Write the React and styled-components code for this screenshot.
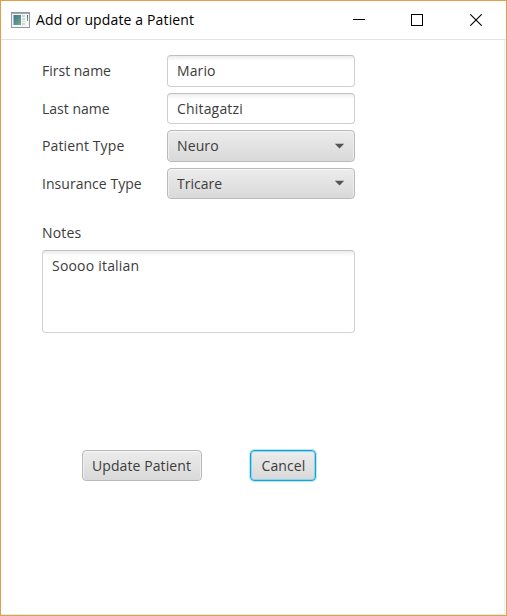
import React from "react";
import styled, { createGlobalStyle } from "styled-components";

const GlobalStyle = createGlobalStyle`
  * { box-sizing: border-box; }
  html, body { margin: 0; background: #fff; }
  button, input, textarea { font: inherit; letter-spacing: inherit; color: inherit; }
`;

const Window = styled.div`
  width: 507px;
  height: 616px;
  display: flex;
  flex-direction: column;
  border: 1px solid #e09f48;
  background: #fff;
  font-family: "Open Sans", "Noto Sans", sans-serif;
  font-size: 14px;
  color: #3c3c3c;
  overflow: hidden;
`;

const TitleBar = styled.header`
  flex: none;
  height: 39px;
  display: flex;
  align-items: center;
  padding: 0 1px 0 10px;
  border-bottom: 1px solid #e3e3e3;
`;

const AppIcon = styled.svg`
  display: block;
  width: 19px;
  height: 16px;
  margin-top: -1px;
`;

const Title = styled.h1`
  margin: 0 auto 0 6px;
  font-size: 14px;
  line-height: 20px;
  font-weight: 400;
  letter-spacing: 0.14px;
  color: #000;
  white-space: nowrap;
`;

const WindowButton = styled.button`
  width: 58.5px;
  height: 38px;
  padding: 0;
  display: flex;
  align-items: center;
  justify-content: center;
  border: 0;
  background: none;

  svg { display: block; }
`;

const Content = styled.main`
  flex: 1;
  margin: 0 1px 0 0;
  border-right: 1px solid #edf0ee;
  border-bottom: 1px solid #e3e8e4;
  padding: 15px 0 0 41px;
`;

const Fields = styled.div`
  display: grid;
  grid-template-columns: 125px 188px;
  grid-auto-rows: 31.5px;
  row-gap: 6px;
`;

const Label = styled.label`
  display: block;
  line-height: 32px;
  white-space: nowrap;
  letter-spacing: ${(p) => p.$spacing || "0"};
`;

const TextInput = styled.input`
  width: 188px;
  height: 31.5px;
  padding: 0 9px;
  border: 1px solid #cfcfcf;
  border-top-color: #c0c0c0;
  border-radius: 4px;
  outline: 0;
  background: linear-gradient(#ececec, #fff 5px);
  letter-spacing: ${(p) => p.$spacing || "0"};
`;

const Combo = styled.button`
  width: 188px;
  height: 31.5px;
  padding: 0 9px;
  display: flex;
  align-items: center;
  justify-content: space-between;
  border: 1px solid #bababa;
  border-radius: 4px;
  background: linear-gradient(#ececec, #d9d9d9);
  box-shadow: inset 0 1px 0 #f6f6f6, inset 1px 0 0 #eee, inset -1px 0 0 #eee;
  letter-spacing: ${(p) => p.$spacing || "0"};
`;

const NotesLabel = styled(Label)`
  margin-top: 17.5px;
`;

const Notes = styled.textarea`
  display: block;
  width: 313px;
  height: 82.5px;
  margin-top: 1.5px;
  padding: 5px 9px;
  line-height: 20px;
  resize: none;
  outline: 0;
  border: 1px solid #d3d3d3;
  border-top-color: #c0c0c0;
  border-radius: 4px;
  background: linear-gradient(#ececec, #fff 5px);
  letter-spacing: ${(p) => p.$spacing || "0"};
`;

const Actions = styled.div`
  display: flex;
  gap: 48.4px;
  margin: 117px 0 0 40px;
`;

const ActionButton = styled.button`
  width: ${(p) => p.$width};
  height: 31.5px;
  padding: 0 1px 0 0;
  border: 1px solid #bababa;
  border-radius: 4px;
  background: linear-gradient(#ececec, #d9d9d9);
  box-shadow: inset 0 1px 0 #f6f6f6, inset 1px 0 0 #eee, inset -1px 0 0 #eee;
  white-space: nowrap;
  letter-spacing: ${(p) => p.$spacing || "0"};

  &[data-focused="true"] {
    padding: 0;
    border-color: #12a5d8;
    box-shadow: 0 0 0 1px #bce7f5, inset 0 0 0 1px #8dd3eb;
  }
`;

function Arrow() {
  return (
    <svg width="11" height="6" viewBox="0 0 11 6">
      <path d="M.8.8h9.4L5.5 5.6z" fill="#555" />
    </svg>
  );
}

export default function App() {
  return (
    <>
      <GlobalStyle />
      <Window>
        <TitleBar>
          <AppIcon viewBox="0 0 19 16">
            <defs>
              <linearGradient id="screen" x2="1" y2="1">
                <stop stopColor="#3c729a" />
                <stop offset="1" stopColor="#6fae7c" />
              </linearGradient>
              <linearGradient id="meter" x2="0" y2="1">
                <stop stopColor="#345f9c" />
                <stop offset="1" stopColor="#5fbe6c" />
              </linearGradient>
            </defs>
            <rect x=".5" y=".5" width="18" height="15" fill="#f5f6f7" stroke="#92989e" />
            <path d="M1 1h17v1H1z" fill="#a3a9af" />
            <rect x="2.5" y="3" width="7.5" height="10" fill="url(#screen)" />
            <path d="M11 3h3v2h-3zM11 6h3v2h-3zM11 9h3v1h-3zM11 11h3v2h-3z" fill="#d5d5d5" />
            <path d="M16 3h1v6h-1z" fill="url(#meter)" />
          </AppIcon>
          <Title>Add or update a Patient</Title>
          <WindowButton aria-label="Minimize">
            <svg width="12" height="12" shapeRendering="crispEdges">
              <path d="M0 5h12v1H0z" fill="#000" />
            </svg>
          </WindowButton>
          <WindowButton aria-label="Maximize">
            <svg width="12" height="12" shapeRendering="crispEdges">
              <rect x=".5" y=".5" width="11" height="11" fill="none" stroke="#000" />
            </svg>
          </WindowButton>
          <WindowButton aria-label="Close">
            <svg width="12" height="12">
              <path d="M.3.3l11.4 11.4M11.7.3L.3 11.7" stroke="#000" strokeWidth="1.1" />
            </svg>
          </WindowButton>
        </TitleBar>
        <Content>
          <Fields>
            <Label>First name</Label>
            <TextInput defaultValue="Mario" $spacing="0.1px" />
            <Label>Last name</Label>
            <TextInput defaultValue="Chitagatzi" $spacing="0.18px" />
            <Label $spacing="0.12px">Patient Type</Label>
            <Combo $spacing="0.12px">Neuro<Arrow /></Combo>
            <Label $spacing="0.04px">Insurance Type</Label>
            <Combo>Tricare<Arrow /></Combo>
          </Fields>
          <NotesLabel $spacing="0.2px">Notes</NotesLabel>
          <Notes defaultValue="Soooo italian" $spacing="0.2px" />
          <Actions>
            <ActionButton $width="120px" $spacing="0.1px">Update Patient</ActionButton>
            <ActionButton $width="66px" $spacing="0.08px" data-focused="true">Cancel</ActionButton>
          </Actions>
        </Content>
      </Window>
    </>
  );
}
